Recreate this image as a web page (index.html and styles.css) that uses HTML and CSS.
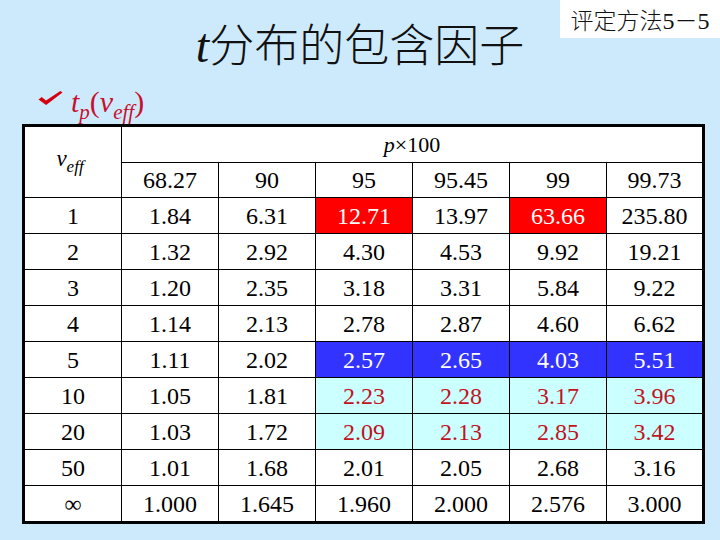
FILE: index.html
```html
<!DOCTYPE html>
<html>
<head>
<meta charset="utf-8">
<title>t分布的包含因子</title>
<link rel="stylesheet" href="styles.css">
</head>
<body>
<div class="badge"><span class="cjk">评定方法</span>5<span class="cjk">－</span>5</div>
<h1 class="title"><i class="t">t</i><span class="cjk">分布的包含因子</span></h1>
<div class="sub">
  <svg class="check" viewBox="0 0 24 14" width="25" height="14"><path d="M0 8.5 L3.2 6 L7.5 9.6 L21.8 0 L24 1.6 L7.6 14 Z" fill="#d40012"/></svg>
  <span class="formula"><i>t</i><sub><i>p</i></sub>(<i>v</i><sub><i>eff</i></sub>)</span>
</div>
<table class="tbl">
  <colgroup>
    <col class="c0"><col class="c"><col class="c"><col class="c"><col class="c"><col class="c"><col class="c">
  </colgroup>
  <tr class="h1">
    <td rowspan="2" class="veff"><i>v</i><sub><i>eff</i></sub></td>
    <td colspan="6" class="pp"><i>p</i>×100</td>
  </tr>
  <tr class="h2">
    <td>68.27</td><td>90</td><td>95</td><td>95.45</td><td>99</td><td>99.73</td>
  </tr>
  <tr><td>1</td><td>1.84</td><td>6.31</td><td class="red">12.71</td><td>13.97</td><td class="red">63.66</td><td>235.80</td></tr>
  <tr><td>2</td><td>1.32</td><td>2.92</td><td>4.30</td><td>4.53</td><td>9.92</td><td>19.21</td></tr>
  <tr><td>3</td><td>1.20</td><td>2.35</td><td>3.18</td><td>3.31</td><td>5.84</td><td>9.22</td></tr>
  <tr><td>4</td><td>1.14</td><td>2.13</td><td>2.78</td><td>2.87</td><td>4.60</td><td>6.62</td></tr>
  <tr><td>5</td><td>1.11</td><td>2.02</td><td class="blue">2.57</td><td class="blue">2.65</td><td class="blue">4.03</td><td class="blue">5.51</td></tr>
  <tr><td>10</td><td>1.05</td><td>1.81</td><td class="cyan">2.23</td><td class="cyan">2.28</td><td class="cyan">3.17</td><td class="cyan">3.96</td></tr>
  <tr><td>20</td><td>1.03</td><td>1.72</td><td class="cyan">2.09</td><td class="cyan">2.13</td><td class="cyan">2.85</td><td class="cyan">3.42</td></tr>
  <tr><td>50</td><td>1.01</td><td>1.68</td><td>2.01</td><td>2.05</td><td>2.68</td><td>3.16</td></tr>
  <tr class="last"><td class="inf">∞</td><td>1.000</td><td>1.645</td><td>1.960</td><td>2.000</td><td>2.576</td><td>3.000</td></tr>
</table>
</body>
</html>
```
FILE: styles.css
```css
html, body {
  margin: 0;
  padding: 0;
}
body {
  width: 720px;
  height: 540px;
  overflow: hidden;
  position: relative;
  background: #cdeafc;
  font-family: "Liberation Serif", "Times New Roman", Tinos, "DejaVu Serif", serif;
  color: #000;
}
.cjk {
  font-family: "Noto Sans CJK SC", sans-serif;
}
.badge {
  position: absolute;
  top: 0;
  right: 0;
  width: 160px;
  height: 38px;
  background: #fff;
  font-size: 24px;
  line-height: 38px;
  text-align: center;
  color: #111;
}
.badge .cjk {
  font-size: 23px;
  font-weight: 300;
}
.title {
  margin: 0;
  padding-top: 18px;
  height: 50px;
  line-height: 50px;
  text-align: center;
  font-size: 46px;
  font-weight: normal;
  color: #111;
}
.title .cjk {
  font-size: 45px;
  font-weight: 300;
}
.title .t {
  font-style: italic;
  font-size: 48px;
}
.sub {
  height: 56px;
  box-sizing: border-box;
  padding-left: 38px;
  padding-top: 20px;
  display: flex;
  align-items: flex-start;
  gap: 8px;
}
.check {
  margin-top: 3px;
  display: block;
}
.formula {
  font-size: 30px;
  line-height: 20px;
  color: #c8102e;
  margin-top: 4px;
}
.formula sub {
  font-size: 21px;
  vertical-align: -7px;
}
.tbl {
  margin-left: 22px;
  border-collapse: collapse;
  border: 3px solid #000;
  background: #fff;
  table-layout: fixed;
  width: 682px;
}
.c0 { width: 98px; }
.c { width: 97px; }
.tbl td {
  border: 1px solid #000;
  padding: 0;
  text-align: center;
  vertical-align: middle;
  font-size: 24px;
  height: 35px;
  line-height: 24px;
}
.tbl tr.h1 td { height: 35px; }
.tbl tr.h2 td { height: 34px; }
.tbl td.pp {
  font-size: 22px;
}
.tbl td.veff {
  font-size: 23px;
  line-height: 20px;
  padding-right: 6px;
  padding-bottom: 4px;
}
.veff sub {
  font-size: 17px;
  line-height: 10px;
  vertical-align: -6px;
}
.tbl td.red {
  background: #ff0000;
  color: #fff;
}
.tbl td.blue {
  background: #3333ff;
  color: #fff;
}
.tbl td.cyan {
  background: #ccffff;
  color: #c0141e;
}
```
